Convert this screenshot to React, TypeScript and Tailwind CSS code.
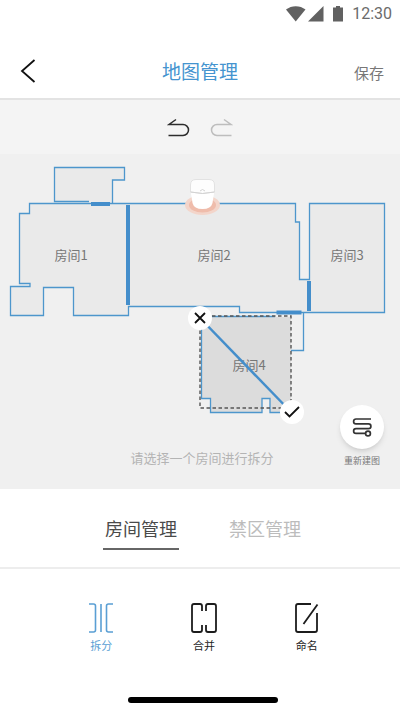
import { useState } from "react";

interface Room {
  id: string;
  name: string;
  x: number;
  y: number;
}

const rooms: Room[] = [
  { id: "room-1", name: "房间1", x: 71, y: 106 },
  { id: "room-2", name: "房间2", x: 214, y: 106 },
  { id: "room-3", name: "房间3", x: 347, y: 106 },
  { id: "room-4", name: "房间4", x: 249, y: 216 },
];

const tabs = [
  { id: "rooms", label: "房间管理" },
  { id: "zones", label: "禁区管理" },
];

const actions = [
  { id: "split", label: "拆分", Icon: SplitIcon },
  { id: "merge", label: "合并", Icon: MergeIcon },
  { id: "rename", label: "命名", Icon: RenameIcon },
];

function SplitIcon() {
  return (
    <svg width="26" height="30" viewBox="0 0 26 30" fill="none" stroke="currentColor" strokeWidth="1.6">
      <path d="M1 1h4.5q2 0 2 2v24q0 2-2 2H1M13 1v28M25 1h-4.5q-2 0-2 2v24q0 2 2 2H25" />
    </svg>
  );
}

function MergeIcon() {
  return (
    <svg width="26" height="30" viewBox="0 0 26 30" fill="none" stroke="currentColor" strokeWidth="1.8">
      <path d="M11 8V3q0-2-2-2H3Q1 1 1 3v24q0 2 2 2h6q2 0 2-2v-5M15 8V3q0-2 2-2h6q2 0 2 2v24q0 2-2 2h-6q-2 0-2-2v-5" />
    </svg>
  );
}

function RenameIcon() {
  return (
    <svg width="26" height="30" viewBox="0 0 26 30" fill="none" stroke="currentColor" strokeWidth="1.8">
      <path d="M17 1H4Q2 1 2 3v24q0 2 2 2h17q2 0 2-2V10M23.500 1.500L9.500 21" />
    </svg>
  );
}

function StatusBar() {
  return (
    <div className="flex h-7 items-center justify-end pr-2 text-[#616161]">
      <svg width="60" height="18" viewBox="0 0 60 18" fill="currentColor">
        <path d="M0 4.5C5.500 0 14 0 19.500 4.500L9.700 16.500z" />
        <path d="M37.500 1v15.500H22z" />
        <path d="M47 2.500h3V1h4v1.500h3v14H47z" />
      </svg>
      <span className="ml-1.5 font-['Roboto',sans-serif] text-base leading-7 text-[#6b6b6b]">12:30</span>
    </div>
  );
}

function FloorPlan() {
  return (
    <svg viewBox="0 0 400 335" className="block w-full" role="img" aria-label="地图">
      <g fill="#eaeaea" stroke="#4d96cc" strokeWidth="1.3">
        <path d="M89 47.500H54.500v-34H124.500V26H112.500v23.500" />
        <path d="M29.500 49.500H295.500V68H299.500V125.500H309.500V49.500H384.500V158.500H239.500V152.500H128.500V161.500H73.500V133.500H43.500V161.500H10.500V132.500H30V129.500H19.500V59.500H29.500z" />
      </g>
      <path d="M201.500 163H291v95H270v-14h-8v14h-51.500v-14h-9z" fill="#dcdcdc" />
      <g fill="none" stroke="#4d96cc" strokeWidth="1.3">
        <path d="M275 162.500H201.500V244.500H210.500V258.500H262V244.500H270V258.500H285" />
        <path d="M291 196.500H303.500V158.500" />
      </g>
      <rect x="200" y="162" width="91" height="92" fill="none" stroke="#555" strokeWidth="1.4" strokeDasharray="3.5 2.5" />
      <path d="M91 50h19M128 51v100M309 127v30M276.500 158.500h25" stroke="#448ecb" strokeWidth="4" />
      <g fontSize="13" fill="#777" textAnchor="middle">
        {rooms.map((room) => (
          <text key={room.id} x={room.x} y={room.y}>
            {room.name}
          </text>
        ))}
      </g>
      <path d="M200 164L291 258" stroke="#448ecb" strokeWidth="2.5" />
      {/* Robot */}
      <ellipse cx="202.5" cy="51" rx="17.5" ry="10" fill="#f3d5ca" />
      <ellipse cx="202.5" cy="51" rx="13.5" ry="7.5" fill="#efbcab" />
      <path d="M190.500 36l2 13q1.500 6 10 6t10-6l2-13z" fill="#fff" />
      <path d="M190.500 38v-7q0-5.500 5.500-5.500h13q5.500 0 5.500 5.500v7q-12 3-24 0z" fill="#fdfdfd" stroke="#e2e2e2" />
      <path d="M190.500 38q12 3 24 0M200 37q2.500-3 5 0" fill="none" stroke="#d2d2d2" />
    </svg>
  );
}

export default function App() {
  const [activeTab, setActiveTab] = useState("rooms");
  const [activeAction, setActiveAction] = useState("split");

  return (
    <div className="flex min-h-screen flex-col bg-white font-['Noto_Sans_CJK_SC',sans-serif]">
      <StatusBar />

      <header className="grid h-[72px] grid-cols-3 items-center border-b-2 border-[#e3e3e3] px-4 pt-4">
        <button aria-label="返回" className="justify-self-start p-1">
          <svg width="16" height="24" viewBox="0 0 16 24" fill="none" stroke="#111" strokeWidth="1.8">
            <path d="M14.500 1L2 12l12.500 11" />
          </svg>
        </button>
        <h1 className="text-center text-[19px] leading-6 text-[#4594cf]">地图管理</h1>
        <button className="justify-self-end pt-1 text-[15px] leading-5 text-[#777]">保存</button>
      </header>

      <div className="flex h-[54px] items-center justify-center gap-5 bg-[#f4f4f4] pt-0.5">
        <button aria-label="撤销" className="text-[#2c2c2c]">
          <svg width="23" height="20" viewBox="0 0 23 20" fill="none" stroke="currentColor" strokeWidth="1.5">
            <path d="M9 1.500L2 6.500H16a5.500 5.500 0 0 1 0 11H1.500" />
          </svg>
        </button>
        <button aria-label="重做" className="text-[#bdbdbd]">
          <svg width="23" height="20" viewBox="0 0 23 20" fill="none" stroke="currentColor" strokeWidth="1.5">
            <path d="M14 1.500L21 6.500H7a5.500 5.500 0 0 0 0 11h14.500" />
          </svg>
        </button>
      </div>

      <main className="relative bg-[#f0f0f0]">
        <FloorPlan />
        <button
          aria-label="取消"
          className="absolute left-1/2 top-[49%] flex size-6 -translate-x-1/2 -translate-y-1/2 items-center justify-center rounded-full bg-white"
        >
          <svg width="12" height="12" viewBox="0 0 12 12" stroke="#111" strokeWidth="1.8">
            <path d="M1 1l10 10M11 1L1 11" />
          </svg>
        </button>
        <button
          aria-label="确定"
          className="absolute left-[73%] top-[77%] flex size-6 -translate-x-1/2 -translate-y-1/2 items-center justify-center rounded-full bg-white"
        >
          <svg width="16" height="12" viewBox="0 0 16 12" fill="none" stroke="#111" strokeWidth="1.8">
            <path d="M1 6l4.500 4.500L15 1" />
          </svg>
        </button>
        <p className="absolute inset-x-0 bottom-5 pb-px pl-1 text-center text-[13px] leading-5 text-[#b4b4b4]">
          请选择一个房间进行拆分
        </p>
        <button className="absolute bottom-5 right-4 flex flex-col items-center gap-1 text-[9px] leading-4 text-[#777]">
          <span className="flex size-11 items-center justify-center rounded-full bg-white shadow-md">
            <svg width="20" height="20" viewBox="0 0 20 20" fill="none" stroke="#333" strokeWidth="1.7">
              <path d="M19 2H4a2.400 2.400 0 0 0 0 4.800H16.500a2.400 2.400 0 0 1 0 4.800H4a2.400 2.400 0 0 0 0 4.800H13.500" />
              <circle cx="16" cy="16.500" r="2.400" fill="#fff" />
            </svg>
          </span>
          重新建图
        </button>
      </main>

      <div role="tablist" className="flex h-20 justify-center gap-12 border-b-2 border-[#ededed] pl-1.5 pt-[25px]">
        {tabs.map((tab) => {
          const isActive = activeTab === tab.id;
          return (
            <button
              key={tab.id}
              role="tab"
              aria-selected={isActive}
              onClick={() => setActiveTab(tab.id)}
              className={
                isActive
                  ? "h-9 border-b-2 border-[#666] px-0.5 pb-2 text-lg leading-7 text-[#4a4a4a]"
                  : "h-9 border-b-2 border-transparent px-0.5 pb-2 text-lg leading-7 text-[#bcbcbc]"
              }
            >
              {tab.label}
            </button>
          );
        })}
      </div>

      <div className="grid grid-cols-3 pl-[50px] pr-[42px] pt-[34px]">
        {actions.map(({ id, label, Icon }) => (
          <button
            key={id}
            aria-pressed={activeAction === id}
            onClick={() => setActiveAction(id)}
            className={
              activeAction === id
                ? "flex flex-col items-center gap-1 text-[11px] leading-4 text-[#5a9fd4]"
                : "flex flex-col items-center gap-1 text-[11px] leading-4 text-[#1c1c1c]"
            }
          >
            <Icon />
            {label}
          </button>
        ))}
      </div>

      <div className="mt-auto flex justify-center pb-[9px] pl-1.5">
        <div className="h-1.5 w-[150px] rounded-full bg-black" />
      </div>
    </div>
  );
}
